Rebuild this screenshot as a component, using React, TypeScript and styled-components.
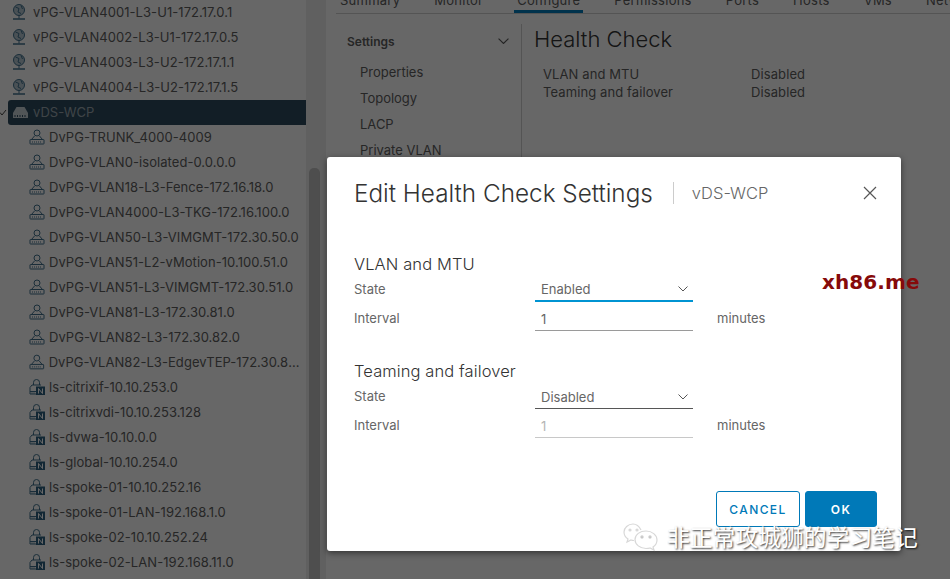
import React from 'react'
import styled, { createGlobalStyle } from 'styled-components'

const GlobalStyle = createGlobalStyle`
  html, body {
    margin: 0;
    padding: 0;
    width: 950px;
    height: 579px;
    overflow: hidden;
    background: #fff;
  }
  body {
    font-family: Inter, "Open Sans", "Noto Sans CJK SC", sans-serif;
  }
`

const Page = styled.div`
  position: relative;
  width: 950px;
  height: 579px;
  overflow: hidden;
  display: flex;
  background: #fafafa;
`

const Sidebar = styled.div`
  width: 326px;
  display: flex;
  flex-shrink: 0;
`

const TreeList = styled.div`
  width: 306px;
  flex-shrink: 0;
`

const TreeRow = styled.div<{ $selected?: boolean; $child?: boolean }>`
  height: 25px;
  box-sizing: border-box;
  display: flex;
  align-items: center;
  gap: ${(p) => (p.$child ? 4 : 7)}px;
  padding: 0 4px 1px ${(p) => (p.$child ? 29 : 12)}px;
  font-size: 13px;
  letter-spacing: 0.06px;
  white-space: nowrap;
  color: ${(p) => (p.$selected ? '#9aa6ad' : '#5d5d5d')};
  background: ${(p) => (p.$selected ? '#2d4a5e' : 'transparent')};
  position: relative;
  overflow: hidden;
`

const SelectedRow = styled(TreeRow)`
  margin-left: 8px;
  padding-left: 5px;
  gap: 5px;
  border-radius: 3px 0 0 3px;
  overflow: visible;
`

const Caret = styled.svg`
  position: absolute;
  left: -9px;
  top: 9px;
`

const RowLabel = styled.span`
  overflow: hidden;
  text-overflow: ellipsis;
`

const Scrollbar = styled.div`
  flex: 1;
  padding: 168px 0 0 3px;
  background: #e8e8e8;
`

const ScrollThumb = styled.div`
  width: 11px;
  height: 411px;
  border-radius: 5px 5px 0 0;
  background: #bebebe;
`

const Content = styled.div`
  flex: 1;
  padding-left: 10px;
  min-width: 0;
`

const Tabs = styled.div`
  height: 13px;
  display: flex;
  gap: 28px;
  padding-left: 1px;
  border-bottom: 1px solid #ccc;
  overflow: hidden;
  font-size: 13px;
  letter-spacing: 0.25px;
`

const Tab = styled.div<{ $active?: boolean }>`
  height: 13px;
  line-height: 0;
  padding: 0 3px;
  color: #5d5d5d;
  white-space: nowrap;
  border-bottom: ${(p) => (p.$active ? '3px solid #0079b8' : '0')};
  box-sizing: border-box;
`

const ConfigureBody = styled.div`
  display: flex;
  height: 160px;
  margin-top: 10px;
`

const SettingsNav = styled.div`
  width: 186px;
  flex-shrink: 0;
  border-right: 1px solid #ccc;
  padding-top: 8px;
  box-sizing: border-box;
`

const NavHeader = styled.div`
  display: flex;
  justify-content: space-between;
  align-items: center;
  padding: 0 0 0 11px;
  height: 18px;
  margin-bottom: 9px;
  font-size: 12px;
  font-weight: 600;
  color: #5d5d5d;
  svg {
    margin-right: 12px;
  }
`

const NavItem = styled.div`
  height: 26px;
  line-height: 26px;
  padding-left: 24px;
  font-size: 13px;
  color: #5d5d5d;
`

const HealthPane = styled.div`
  padding: 2px 0 0 12px;
`

const HealthTitle = styled.h2`
  margin: 0 0 13px;
  font-size: 22px;
  font-weight: 300;
  line-height: 26px;
  color: #333;
`

const HealthRow = styled.div`
  display: flex;
  padding-left: 9px;
  height: 18px;
  line-height: 18px;
  font-size: 13px;
  letter-spacing: 0.1px;
  color: #5d5d5d;
`

const HealthLabel = styled.div`
  width: 208px;
`

const Backdrop = styled.div`
  position: absolute;
  inset: 0;
  background: rgba(0, 0, 0, 0.59);
`

const Modal = styled.div`
  position: absolute;
  left: 327px;
  top: 157px;
  width: 574px;
  height: 394px;
  box-sizing: border-box;
  background: #fff;
  border-radius: 3px;
  box-shadow: 0 2px 6px rgba(0, 0, 0, 0.5);
  padding: 0 24px 0 27px;
  display: flex;
  flex-direction: column;
`

const ModalHeader = styled.div`
  display: flex;
  align-items: center;
  height: 72px;
`

const ModalTitle = styled.h3`
  margin: 0;
  font-size: 24.3px;
  font-weight: 300;
  color: #333;
  white-space: nowrap;
`

const ModalSubject = styled.div`
  margin-left: 20px;
  padding-left: 18px;
  border-left: 1px solid #ccc;
  height: 22px;
  line-height: 22px;
  font-size: 16.5px;
  font-weight: 300;
  color: #666;
`

const CloseButton = styled.button`
  margin-left: auto;
  margin-right: -1px;
  width: 16px;
  height: 16px;
  padding: 0;
  border: 0;
  background: none;
  display: flex;
`

const Section = styled.section<{ $first?: boolean }>`
  margin-top: ${(p) => (p.$first ? 24 : 27)}px;
`

const SectionTitle = styled.div`
  font-size: 16.5px;
  font-weight: 300;
  letter-spacing: 0.1px;
  line-height: 22px;
  color: #333;
`

const FormRow = styled.div`
  display: grid;
  grid-template-columns: 181px 158px auto;
  align-items: center;
  height: 29px;
  box-sizing: border-box;
  padding-bottom: 1px;
  font-size: 13px;
  color: #666;
`

const Field = styled.div<{ $line: string; $thick?: boolean; $muted?: boolean }>`
  grid-column: 2;
  align-self: end;
  height: 24px;
  margin-bottom: 1px;
  box-sizing: border-box;
  border-bottom: ${(p) => (p.$thick ? 2 : 1)}px solid ${(p) => p.$line};
  display: flex;
  align-items: center;
  justify-content: space-between;
  padding: 0 5px 0 6px;
  color: ${(p) => (p.$muted ? '#b5b5b5' : '#666')};
`

const Unit = styled.div`
  margin-left: 24px;
`

const ModalFooter = styled.div`
  margin-top: auto;
  padding-bottom: 24px;
  display: flex;
  justify-content: flex-end;
  gap: 5px;
`

const FooterButton = styled.button<{ $primary?: boolean }>`
  width: ${(p) => (p.$primary ? 72 : 84)}px;
  height: 36px;
  box-sizing: border-box;
  border-radius: 3px;
  border: 1px solid #0079b8;
  background: ${(p) => (p.$primary ? '#0079b8' : '#fff')};
  color: ${(p) => (p.$primary ? '#fff' : '#0079b8')};
  font-family: inherit;
  font-size: 12px;
  font-weight: ${(p) => (p.$primary ? 600 : 500)};
  letter-spacing: 1.4px;
`

const SiteMark = styled.div`
  position: absolute;
  left: 822px;
  top: 270px;
  font-family: "DejaVu Sans", sans-serif;
  font-size: 20px;
  font-weight: 700;
  letter-spacing: 0.1px;
  line-height: 24px;
  color: #860a0a;
`

const Watermark = styled.div`
  position: absolute;
  left: 623px;
  top: 522px;
  display: flex;
  align-items: center;
  gap: 7px;
  font-family: "Noto Sans CJK SC", sans-serif;
  font-size: 22.8px;
  line-height: 30px;
  color: #fff;
  text-shadow: 1px 1px 2px rgba(0, 0, 0, 0.8);
  white-space: nowrap;
`

const PortGroupIcon = () => (
  <svg width="16" height="16" viewBox="0 0 16 16" fill="none" stroke="#3f6f8c" strokeWidth="1">
    <circle cx="8" cy="4" r="3" />
    <path d="M5.5 7 2.500 10.500M10.500 7l3 3.500" />
    <rect x="1" y="10.500" width="14" height="4.500" rx="0.500" />
    <path d="M3 13h10" strokeDasharray="1 1" />
  </svg>
)

const LogicalSwitchIcon = () => (
  <svg width="16" height="16" viewBox="0 0 16 16" fill="none" stroke="#3f6f8c" strokeWidth="1">
    <path d="M4.500 6V3.500a3 3 0 0 1 6 0V6" />
    <path d="M1 15V8.500L3 6h9" />
    <path d="M1 15h6M1 12.500h6" />
    <path d="M2.500 14h3" strokeDasharray="1 1" />
    <rect x="7" y="7.500" width="9" height="8.500" fill="#2d5f7e" stroke="none" />
    <path d="M9.500 14.500v-5l4 5v-5" stroke="#fff" />
  </svg>
)

const GlobeIcon = () => (
  <svg width="14" height="16" viewBox="0 0 14 16" fill="none" stroke="#3f6f8c" strokeWidth="1">
    <circle cx="7" cy="6" r="5.500" fill="#b4c4ce" />
    <path d="M3.500 3 7 4.500 6 8l3 1.500M9 1.500 10.500 5" />
    <path d="M7 11.500v3" />
    <path d="M1 15h12" strokeWidth="1.500" />
  </svg>
)

const SwitchIcon = () => (
  <svg width="15" height="11" viewBox="0 0 15 11" fill="#c4ced4">
    <path d="M3.500 0h8L15 6v5H0V6z" />
    <path d="M2 8v2M4.500 8v2M7 8v2M9.500 8v2M12 8v2" stroke="#2d4a5e" />
  </svg>
)

const Chevron = ({ color = '#565656', size = 10 }: { color?: string; size?: number }) => (
  <svg width={size} height={size * 0.6} viewBox="0 0 10 6" fill="none" stroke={color} strokeWidth="1">
    <path d="M.5.5 5 5 9.500.5" />
  </svg>
)

const WeChatIcon = () => (
  <svg width="37" height="30" viewBox="0 0 37 30" fill="none" stroke="#d8d8d8" strokeWidth="1.200">
    <path d="M18 8C16 4 13 2 10 2 5 2 1 6 1 10c0 3 1 5 4 7l-1 3 4-2c1 .4 2 .5 3 .5" />
    <circle cx="7" cy="8" r="1" fill="#d8d8d8" />
    <circle cx="14" cy="8" r="1" fill="#d8d8d8" />
    <path d="M23 9c6 0 11 4 11 9 0 3-1 5-4 7l1 3-4-2c-1 .3-3 .5-4 .5-6 0-11-4-11-9s5-8.500 11-8.500z" fill="#fff" />
    <circle cx="19" cy="15" r="1.200" fill="#999" />
    <circle cx="27" cy="15" r="1.200" fill="#999" />
  </svg>
)

const topRows = [
  'vPG-VLAN4001-L3-U1-172.17.0.1',
  'vPG-VLAN4002-L3-U1-172.17.0.5',
  'vPG-VLAN4003-L3-U2-172.17.1.1',
  'vPG-VLAN4004-L3-U2-172.17.1.5',
]

const portGroups = [
  'DvPG-TRUNK_4000-4009',
  'DvPG-VLAN0-isolated-0.0.0.0',
  'DvPG-VLAN18-L3-Fence-172.16.18.0',
  'DvPG-VLAN4000-L3-TKG-172.16.100.0',
  'DvPG-VLAN50-L3-VIMGMT-172.30.50.0',
  'DvPG-VLAN51-L2-vMotion-10.100.51.0',
  'DvPG-VLAN51-L3-VIMGMT-172.30.51.0',
  'DvPG-VLAN81-L3-172.30.81.0',
  'DvPG-VLAN82-L3-172.30.82.0',
  'DvPG-VLAN82-L3-EdgevTEP-172.30.82.0',
]

const logicalSwitches = [
  'ls-citrixif-10.10.253.0',
  'ls-citrixvdi-10.10.253.128',
  'ls-dvwa-10.10.0.0',
  'ls-global-10.10.254.0',
  'ls-spoke-01-10.10.252.16',
  'ls-spoke-01-LAN-192.168.1.0',
  'ls-spoke-02-10.10.252.24',
  'ls-spoke-02-LAN-192.168.11.0',
]

const tabs = ['Summary', 'Monitor', 'Configure', 'Permissions', 'Ports', 'Hosts', 'VMs', 'Networks']

export default function App() {
  return (
    <Page>
      <GlobalStyle />
      <Sidebar>
        <TreeList>
          {topRows.map((name) => (
            <TreeRow key={name}>
              <GlobeIcon />
              <RowLabel>{name}</RowLabel>
            </TreeRow>
          ))}
          <SelectedRow $selected>
            <Caret width="9" height="7" viewBox="0 0 9 7" fill="none" stroke="#444">
              <path d="M1 3.500 3 6l4-5" />
            </Caret>
            <SwitchIcon />
            <RowLabel>vDS-WCP</RowLabel>
          </SelectedRow>
          {portGroups.map((name) => (
            <TreeRow key={name} $child>
              <PortGroupIcon />
              <RowLabel>{name}</RowLabel>
            </TreeRow>
          ))}
          {logicalSwitches.map((name) => (
            <TreeRow key={name} $child>
              <LogicalSwitchIcon />
              <RowLabel>{name}</RowLabel>
            </TreeRow>
          ))}
        </TreeList>
        <Scrollbar>
          <ScrollThumb />
        </Scrollbar>
      </Sidebar>
      <Content>
        <Tabs>
          {tabs.map((tab) => (
            <Tab key={tab} $active={tab === 'Configure'}>
              {tab}
            </Tab>
          ))}
        </Tabs>
        <ConfigureBody>
          <SettingsNav>
            <NavHeader>
              Settings
              <Chevron size={11} />
            </NavHeader>
            <NavItem>Properties</NavItem>
            <NavItem>Topology</NavItem>
            <NavItem>LACP</NavItem>
            <NavItem>Private VLAN</NavItem>
          </SettingsNav>
          <HealthPane>
            <HealthTitle>Health Check</HealthTitle>
            <HealthRow>
              <HealthLabel>VLAN and MTU</HealthLabel>
              Disabled
            </HealthRow>
            <HealthRow>
              <HealthLabel>Teaming and failover</HealthLabel>
              Disabled
            </HealthRow>
          </HealthPane>
        </ConfigureBody>
      </Content>
      <Backdrop />
      <Modal>
        <ModalHeader>
          <ModalTitle>Edit Health Check Settings</ModalTitle>
          <ModalSubject>vDS-WCP</ModalSubject>
          <CloseButton aria-label="Close">
            <svg width="16" height="16" viewBox="0 0 16 16" stroke="#565656" strokeWidth="1.200">
              <path d="M2 2 14 14M14 2 2 14" />
            </svg>
          </CloseButton>
        </ModalHeader>
        <Section $first>
          <SectionTitle>VLAN and MTU</SectionTitle>
          <FormRow>
            State
            <Field $line="#0094d2" $thick>
              Enabled
              <Chevron />
            </Field>
          </FormRow>
          <FormRow>
            Interval
            <Field $line="#9a9a9a">1</Field>
            <Unit>minutes</Unit>
          </FormRow>
        </Section>
        <Section>
          <SectionTitle>Teaming and failover</SectionTitle>
          <FormRow>
            State
            <Field $line="#565656">
              Disabled
              <Chevron />
            </Field>
          </FormRow>
          <FormRow>
            Interval
            <Field $line="#c8c8c8" $muted>
              1
            </Field>
            <Unit>minutes</Unit>
          </FormRow>
        </Section>
        <ModalFooter>
          <FooterButton>CANCEL</FooterButton>
          <FooterButton $primary>OK</FooterButton>
        </ModalFooter>
      </Modal>
      <SiteMark>xh86.me</SiteMark>
      <Watermark>
        <WeChatIcon />
        非正常攻城狮的学习笔记
      </Watermark>
    </Page>
  )
}
